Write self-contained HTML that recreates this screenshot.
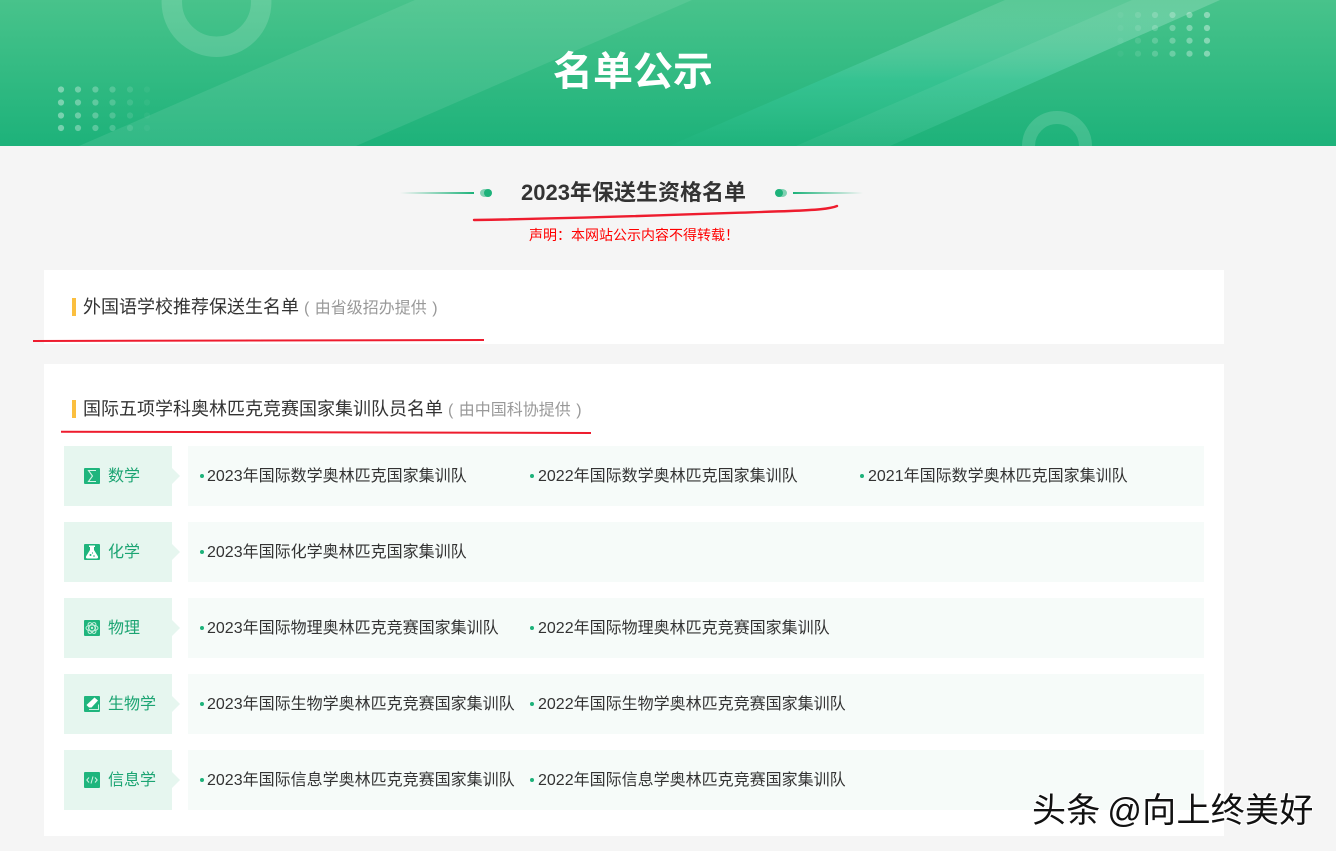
<!DOCTYPE html>
<html lang="zh-CN">
<head>
<meta charset="utf-8">
<title>名单公示</title>
<style>
*{margin:0;padding:0;box-sizing:border-box}
html,body{width:1336px;height:851px;overflow:hidden;background:#f5f5f5}
body{position:relative;font-family:"Liberation Sans","Noto Sans CJK SC",sans-serif;color:#333}
.a{position:absolute;white-space:nowrap}
.hdr{left:0;top:0;width:1336px;height:146px}
.ttl{left:553px;top:42px;font-size:40px;line-height:60px;font-weight:700;color:#fff}
.h2{left:521px;top:176px;font-size:22px;line-height:33px;font-weight:700;color:#333}
.note{left:529px;top:225px;font-size:14px;line-height:20px;color:#f00}
.note i{font-style:normal;font-family:"Noto Sans CJK TC",sans-serif}
.panel{left:44px;width:1180px;background:#fff}
.bar{left:72px;width:4px;height:18px;background:#fbbf3f}
.h3{left:83px;font-size:18px;line-height:26px;color:#333}
.h3 span{font-size:16px;color:#999;margin-left:5px;word-spacing:1px}
.lab{left:64px;width:108px;height:60px;background:#e6f6ef}
.lab:after{content:"";position:absolute;left:108px;top:22px;border-left:8px solid #e6f6ef;border-top:8px solid transparent;border-bottom:8px solid transparent}
.box{left:188px;width:1016px;height:60px;background:#f6fbf9}
.lt{left:108px;font-size:16px;line-height:24px;color:#1ba472}
.it{font-size:16px;line-height:24px;color:#333}
.d{width:4px;height:4px;border-radius:50%;background:#1db27a}
.ic{left:84px;width:16px;height:16px}
.wm{left:1032px;top:788px;font-size:34px;line-height:46px;color:#111;word-spacing:-3px;letter-spacing:.3px;text-shadow:1px 1px 0 #fff,-1px -1px 0 #fff,1px -1px 0 #fff,-1px 1px 0 #fff}
</style>
</head>
<body>
<svg class="a hdr" width="1336" height="146" viewBox="0 0 1336 146">
  <defs>
    <linearGradient id="bg" x1="0" y1="0" x2="0" y2="1"><stop offset="0" stop-color="#48c38b"/><stop offset="1" stop-color="#1db27a"/></linearGradient>
    <linearGradient id="s1" x1="0" y1="0" x2="0" y2="1"><stop offset="0" stop-color="#fff" stop-opacity=".08"/><stop offset="1" stop-color="#fff" stop-opacity=".09"/></linearGradient>
    <linearGradient id="s2" x1="0" y1="0" x2="0" y2="1"><stop offset="0" stop-color="#fff" stop-opacity=".1"/><stop offset=".55" stop-color="#3dd0a8" stop-opacity=".4"/><stop offset="1" stop-color="#3dd0a8" stop-opacity=".03"/></linearGradient>
    <linearGradient id="s3" x1="0" y1="0" x2="0" y2="1"><stop offset="0" stop-color="#fff" stop-opacity=".08"/><stop offset="1" stop-color="#fff" stop-opacity=".05"/></linearGradient>
  </defs>
  <rect width="1336" height="146" fill="url(#bg)"/>
  <polygon points="79,146 415,0 692,0 356,146" fill="url(#s1)"/>
  <polygon points="669,146 1005,0 1220,0 890,146" fill="url(#s2)"/>
  <polygon points="796,146 1132,0 1220,0 890,146" fill="url(#s3)"/>
  <circle cx="216.5" cy="2" r="44.7" fill="none" stroke="#fff" stroke-opacity=".15" stroke-width="20.5"/>
  <circle cx="1057" cy="146" r="28.5" fill="none" stroke="#fff" stroke-opacity=".15" stroke-width="13"/>
  <g fill="#fff" opacity=".85">
    <g opacity=".45"><circle cx="61" cy="89.5" r="3.1"/><circle cx="61" cy="102.5" r="3.1"/><circle cx="61" cy="115.5" r="3.1"/><circle cx="61" cy="128" r="3.1"/></g>
    <g opacity=".38"><circle cx="78" cy="89.5" r="3.1"/><circle cx="78" cy="102.5" r="3.1"/><circle cx="78" cy="115.5" r="3.1"/><circle cx="78" cy="128" r="3.1"/></g>
    <g opacity=".3"><circle cx="95.4" cy="89.5" r="3.1"/><circle cx="95.4" cy="102.5" r="3.1"/><circle cx="95.4" cy="115.5" r="3.1"/><circle cx="95.4" cy="128" r="3.1"/></g>
    <g opacity=".22"><circle cx="112.5" cy="89.5" r="3.1"/><circle cx="112.5" cy="102.5" r="3.1"/><circle cx="112.5" cy="115.5" r="3.1"/><circle cx="112.5" cy="128" r="3.1"/></g>
    <g opacity=".13"><circle cx="130" cy="89.5" r="3.1"/><circle cx="130" cy="102.5" r="3.1"/><circle cx="130" cy="115.5" r="3.1"/><circle cx="130" cy="128" r="3.1"/></g>
    <g opacity=".05"><circle cx="147" cy="89.5" r="3.1"/><circle cx="147" cy="102.5" r="3.1"/><circle cx="147" cy="115.5" r="3.1"/><circle cx="147" cy="128" r="3.1"/></g>
    <g opacity=".05"><circle cx="1120.5" cy="15" r="3.1"/><circle cx="1120.5" cy="28" r="3.1"/><circle cx="1120.5" cy="40.7" r="3.1"/><circle cx="1120.5" cy="53.7" r="3.1"/></g>
    <g opacity=".13"><circle cx="1138" cy="15" r="3.1"/><circle cx="1138" cy="28" r="3.1"/><circle cx="1138" cy="40.7" r="3.1"/><circle cx="1138" cy="53.7" r="3.1"/></g>
    <g opacity=".22"><circle cx="1155" cy="15" r="3.1"/><circle cx="1155" cy="28" r="3.1"/><circle cx="1155" cy="40.7" r="3.1"/><circle cx="1155" cy="53.7" r="3.1"/></g>
    <g opacity=".3"><circle cx="1172.5" cy="15" r="3.1"/><circle cx="1172.5" cy="28" r="3.1"/><circle cx="1172.5" cy="40.7" r="3.1"/><circle cx="1172.5" cy="53.7" r="3.1"/></g>
    <g opacity=".38"><circle cx="1189.5" cy="15" r="3.1"/><circle cx="1189.5" cy="28" r="3.1"/><circle cx="1189.5" cy="40.7" r="3.1"/><circle cx="1189.5" cy="53.7" r="3.1"/></g>
    <g opacity=".45"><circle cx="1207" cy="15" r="3.1"/><circle cx="1207" cy="28" r="3.1"/><circle cx="1207" cy="40.7" r="3.1"/><circle cx="1207" cy="53.7" r="3.1"/></g>
  </g>
</svg>
<div class="a ttl">名单公示</div>

<svg class="a" style="left:390px;top:180px" width="490" height="45" viewBox="390 180 490 45">
  <defs>
    <linearGradient id="l1" x1="0" x2="1" y1="0" y2="0"><stop offset="0" stop-color="#1db27a" stop-opacity="0"/><stop offset="1" stop-color="#1db27a"/></linearGradient>
    <linearGradient id="l2" x1="1" x2="0" y1="0" y2="0"><stop offset="0" stop-color="#1db27a" stop-opacity="0"/><stop offset="1" stop-color="#1db27a"/></linearGradient>
  </defs>
  <rect x="400" y="192" width="74" height="2" fill="url(#l1)"/>
  <rect x="793" y="192" width="70" height="2" fill="url(#l2)"/>
  <ellipse cx="485" cy="193" rx="5" ry="4" fill="#1db27a" opacity=".55"/>
  <ellipse cx="488" cy="193" rx="4" ry="4" fill="#1db27a"/>
  <ellipse cx="782" cy="193" rx="5" ry="4" fill="#1db27a" opacity=".55"/>
  <ellipse cx="779" cy="193" rx="4" ry="4" fill="#1db27a"/>
  <path d="M474 220C600 218 700 214 790 211C815 210 830 209 837 206" fill="none" stroke="#ee1c2e" stroke-width="2.4" stroke-linecap="round"/>
</svg>
<div class="a h2">2023年保送生资格名单</div>
<div class="a note">声明<i>&#xFF1A;</i>本网站公示内容不得转载<i>&#xFF01;</i></div>

<div class="a panel" style="top:270px;height:74px"></div>
<div class="a bar" style="top:298px"></div>
<div class="a h3" style="top:294px">外国语学校推荐保送生名单<span>( 由省级招办提供 )</span></div>

<div class="a panel" style="top:364px;height:472px"></div>
<div class="a bar" style="top:400px"></div>
<div class="a h3" style="top:396px">国际五项学科奥林匹克竞赛国家集训队员名单<span>( 由中国科协提供 )</span></div>

<svg class="a" style="left:0;top:330px" width="620" height="110" viewBox="0 330 620 110">
  <path d="M33 341L484 340" fill="none" stroke="#ee1c2e" stroke-width="2"/>
  <path d="M61 431.7L591 433" fill="none" stroke="#ee1c2e" stroke-width="2"/>
</svg>

<div class="a lab" style="top:446px"></div><div class="a box" style="top:446px"></div>
<svg class="a ic" style="top:468px" viewBox="0 0 16 16"><rect width="16" height="16" rx="1" fill="#1fb57d"/><path d="M12 2.500H4.500L8.500 8L4.500 13.500H12" fill="none" stroke="#d5f3e6" stroke-width="1.100"/></svg>
<div class="a lt" style="top:465px">数学</div>
<div class="a d" style="left:200px;top:474px"></div><div class="a it" style="left:207px;top:465px">2023年国际数学奥林匹克国家集训队</div>
<div class="a d" style="left:530px;top:474px"></div><div class="a it" style="left:538px;top:465px">2022年国际数学奥林匹克国家集训队</div>
<div class="a d" style="left:860px;top:474px"></div><div class="a it" style="left:868px;top:465px">2021年国际数学奥林匹克国家集训队</div>

<div class="a lab" style="top:522px"></div><div class="a box" style="top:522px"></div>
<svg class="a ic" style="top:544px" viewBox="0 0 16 16"><rect width="16" height="16" rx="1" fill="#1fb57d"/><path d="M5 1.500H11V3H10V6L14 12.500Q14.500 14.500 12.500 14.500H3.500Q1.500 14.500 2 12.500L6 6V3H5Z" fill="#fff"/><circle cx="6.500" cy="11" r="1" fill="#1fb57d"/><circle cx="10" cy="12" r=".8" fill="#1fb57d"/><circle cx="8.500" cy="9" r=".6" fill="#1fb57d"/></svg>
<div class="a lt" style="top:541px">化学</div>
<div class="a d" style="left:200px;top:550px"></div><div class="a it" style="left:207px;top:541px">2023年国际化学奥林匹克国家集训队</div>

<div class="a lab" style="top:598px"></div><div class="a box" style="top:598px"></div>
<svg class="a ic" style="top:620px" viewBox="0 0 16 16"><rect width="16" height="16" rx="1" fill="#1fb57d"/><g fill="none" stroke="#c9f0df" stroke-width=".9"><ellipse cx="8" cy="8" rx="6" ry="3"/><ellipse cx="8" cy="8" rx="6" ry="3" transform="rotate(60 8 8)"/><ellipse cx="8" cy="8" rx="6" ry="3" transform="rotate(120 8 8)"/></g><circle cx="8" cy="8" r="1.200" fill="#c9f0df"/></svg>
<div class="a lt" style="top:617px">物理</div>
<div class="a d" style="left:200px;top:626px"></div><div class="a it" style="left:207px;top:617px">2023年国际物理奥林匹克竞赛国家集训队</div>
<div class="a d" style="left:530px;top:626px"></div><div class="a it" style="left:538px;top:617px">2022年国际物理奥林匹克竞赛国家集训队</div>

<div class="a lab" style="top:674px"></div><div class="a box" style="top:674px"></div>
<svg class="a ic" style="top:696px" viewBox="0 0 16 16"><rect width="16" height="16" rx="1" fill="#1fb57d"/><path d="M10.500 1.500L14 4.500L7.500 11.500H5L2.500 9Z" fill="#fff"/><path d="M5 13.500H14.500V8.500" fill="none" stroke="#c9f0df" stroke-width="1"/></svg>
<div class="a lt" style="top:693px">生物学</div>
<div class="a d" style="left:200px;top:702px"></div><div class="a it" style="left:207px;top:693px">2023年国际生物学奥林匹克竞赛国家集训队</div>
<div class="a d" style="left:530px;top:702px"></div><div class="a it" style="left:538px;top:693px">2022年国际生物学奥林匹克竞赛国家集训队</div>

<div class="a lab" style="top:750px"></div><div class="a box" style="top:750px"></div>
<svg class="a ic" style="top:772px" viewBox="0 0 16 16"><rect width="16" height="16" rx="1" fill="#1fb57d"/><path d="M5 5.500L2.800 8L5 10.500M11 5.500L13.200 8L11 10.500M9 4.500L7 11.500" fill="none" stroke="#d5f3e6" stroke-width="1"/></svg>
<div class="a lt" style="top:769px">信息学</div>
<div class="a d" style="left:200px;top:778px"></div><div class="a it" style="left:207px;top:769px">2023年国际信息学奥林匹克竞赛国家集训队</div>
<div class="a d" style="left:530px;top:778px"></div><div class="a it" style="left:538px;top:769px">2022年国际信息学奥林匹克竞赛国家集训队</div>

<div class="a wm">头条 @向上终美好</div>
</body>
</html>
